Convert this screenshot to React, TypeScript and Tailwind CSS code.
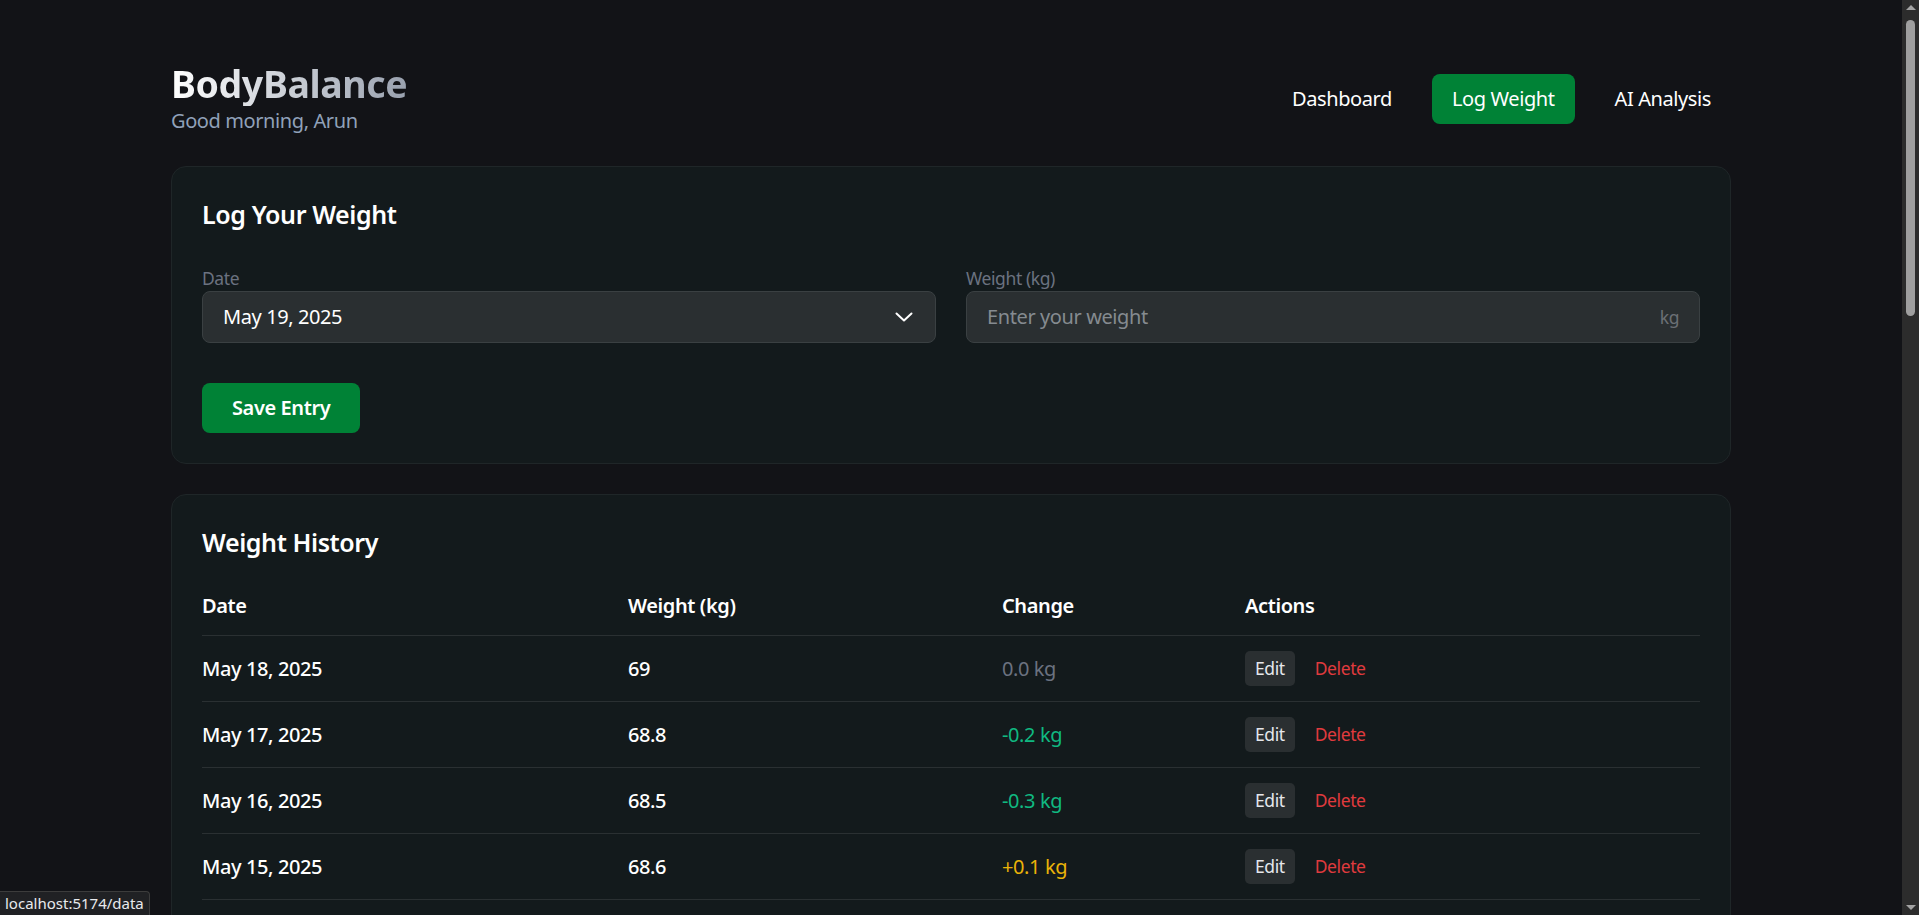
type Entry = { date: string; weight: string; change: string; tone: "flat" | "down" | "up" };

const entries: Entry[] = [
  { date: "May 18, 2025", weight: "69", change: "0.0 kg", tone: "flat" },
  { date: "May 17, 2025", weight: "68.8", change: "-0.2 kg", tone: "down" },
  { date: "May 16, 2025", weight: "68.5", change: "-0.3 kg", tone: "down" },
  { date: "May 15, 2025", weight: "68.6", change: "+0.1 kg", tone: "up" },
  { date: "May 14, 2025", weight: "68.5", change: "-0.2 kg", tone: "down" },
];

const toneClass = {
  flat: "text-[#6b7280]",
  down: "text-[#10b981]",
  up: "text-[#eab308]",
};

const navItems = ["Dashboard", "Log Weight", "AI Analysis"];

const App: React.FC = () => {
  return (
    <div className="flex h-[915px] overflow-hidden bg-[#121317] font-['Noto_Sans','Open_Sans',sans-serif] tracking-[-0.025em] text-white">
      <div className="relative flex-1 overflow-hidden">
        <div className="mx-auto w-[1560px] pt-[61px]">

          {/* header */}
          <div className="flex items-center justify-between">
            <div>
              <h1 className="w-fit bg-linear-to-r from-white to-gray-400 bg-clip-text text-[37.5px] leading-[45px] font-bold text-transparent">
                BodyBalance
              </h1>
              <p className="text-[20px] leading-[30px] text-slate-400">Good morning, Arun</p>
            </div>

            <nav className="flex items-center gap-[20px]">
              {navItems.map((item) => (
                <div
                  key={item}
                  className={
                    item === "Log Weight"
                      ? "rounded-[8px] bg-green-700 px-[20px] py-[10px] text-[20px] leading-[30px]"
                      : "rounded-[8px] px-[20px] py-[10px] text-[20px] leading-[30px]"
                  }
                >
                  {item}
                </div>
              ))}
            </nav>
          </div>

          {/* log form */}
          <div className="mt-[30px] rounded-[15px] border border-[#1f2628] bg-[#131a1c] p-[30px]">
            <h2 className="text-[25px] leading-[35px] font-semibold">Log Your Weight</h2>

            <div className="mt-[34px] grid grid-cols-2 gap-[30px]">
              <div>
                <label className="block text-[17.5px] leading-[25px] text-[#6b7280]">Date</label>
                <div className="flex h-[52px] items-center justify-between rounded-[8px] border border-[#3a4042] bg-[#2a2f31] pr-[22px] pl-[20px]">
                  <span className="text-[20px]">May 19, 2025</span>
                  <svg width="18" height="10" viewBox="0 0 18 10" fill="none">
                    <polyline points="1.5,1.5 9,8.5 16.5,1.5" stroke="white" strokeWidth="2" strokeLinecap="round" strokeLinejoin="round" />
                  </svg>
                </div>
              </div>
              <div>
                <label className="block text-[17.5px] leading-[25px] text-[#6b7280]">Weight (kg)</label>
                <div className="flex h-[52px] items-center justify-between rounded-[8px] border border-[#3a4042] bg-[#2a2f31] px-[20px]">
                  <span className="text-[20px] text-[#858b90]">Enter your weight</span>
                  <span className="text-[17.5px] text-[#6b7075]">kg</span>
                </div>
              </div>
            </div>

            <button className="mt-[40px] h-[50px] rounded-[8px] bg-green-700 px-[30px] text-[20px] font-semibold">
              Save Entry
            </button>
          </div>

          {/* history */}
          <div className="mt-[30px] rounded-[15px] border border-[#1f2628] bg-[#131a1c] px-[30px] pt-[30px]">
            <h2 className="text-[25px] leading-[35px] font-semibold">Weight History</h2>

            <div className="mt-[16px]">
              <div className="grid h-[60px] grid-cols-[426px_374px_243px_1fr] items-center border-b border-[#2a3032] text-[20px] leading-[30px] font-semibold">
                <div>Date</div>
                <div>Weight (kg)</div>
                <div>Change</div>
                <div>Actions</div>
              </div>

              {entries.map((e) => (
                <div
                  key={e.date}
                  className="grid h-[66px] grid-cols-[426px_374px_243px_1fr] items-center border-b border-[#2a3032] text-[20px] leading-[30px]"
                >
                  <div className="font-medium">{e.date}</div>
                  <div className="font-medium">{e.weight}</div>
                  <div className={toneClass[e.tone]}>{e.change}</div>
                  <div className="flex items-center gap-[20px] text-[17.5px] leading-[25px]">
                    <button className="rounded-[5px] bg-[#2a2f31] px-[10px] py-[5px] text-[#e5e7eb]">Edit</button>
                    <button className="text-[#e03a3e]">Delete</button>
                  </div>
                </div>
              ))}
            </div>
          </div>
        </div>

        {/* browser status bubble */}
        <div className="absolute bottom-0 left-0 rounded-tr-[4px] border-t border-r border-[#3c3c3c] bg-[#202124] px-[5px] py-[1px] text-[15px] leading-[21px] tracking-normal text-[#e8eaed]">
          localhost:5174/data
        </div>
      </div>

      {/* scrollbar */}
      <div className="flex w-[17px] flex-col items-center bg-[#2c2c2c]">
        <div className="mt-[5px] h-0 w-0 border-x-[5px] border-b-[5px] border-x-transparent border-b-[#a3a3a3]" />
        <div className="mt-[10px] h-[296px] w-[9px] rounded-full bg-[#9f9f9f]" />
        <div className="flex-1" />
        <div className="mb-[5px] h-0 w-0 border-x-[5px] border-t-[5px] border-x-transparent border-t-[#a3a3a3]" />
      </div>
    </div>
  );
};

export default App;
